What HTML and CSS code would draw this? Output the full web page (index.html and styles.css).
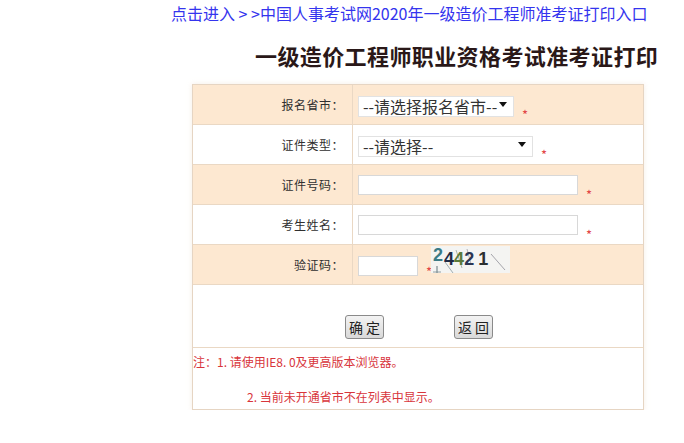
FILE: index.html
```html
<!DOCTYPE html>
<html lang="zh-CN">
<head>
<meta charset="utf-8">
<title>一级造价工程师职业资格考试准考证打印</title>
<link rel="stylesheet" href="styles.css">
</head>
<body>
<div class="page">
  <div class="topline"><a class="toplink" href="#">点击进入 &gt; &gt;中国人事考试网2020年一级造价工程师准考证打印入口</a></div>
  <h1 class="title">一级造价工程师职业资格考试准考证打印</h1>
  <div class="form">
    <div class="row peach">
      <div class="label">报名省市：</div>
      <div class="field">
        <span class="sel sel-wide"><select><option>--请选择报名省市--</option></select></span>
        <span class="req">*</span>
      </div>
    </div>
    <div class="row">
      <div class="label">证件类型：</div>
      <div class="field">
        <span class="sel sel-long"><select><option>--请选择--</option></select></span>
        <span class="req">*</span>
      </div>
    </div>
    <div class="row peach">
      <div class="label">证件号码：</div>
      <div class="field">
        <input class="txt" type="text">
        <span class="req">*</span>
      </div>
    </div>
    <div class="row">
      <div class="label">考生姓名：</div>
      <div class="field">
        <input class="txt" type="text">
        <span class="req">*</span>
      </div>
    </div>
    <div class="row peach">
      <div class="label">验证码：</div>
      <div class="field field-code">
        <input class="txt txt-code" type="text">
        <span class="req req-low">*</span>
        <span class="captcha">
          <svg class="captcha-lines" width="79" height="27" viewBox="0 0 79 27">
            <path d="M4 4 L7 3" stroke="#3b7b86" stroke-width="1" fill="none"/>
            <path d="M6 20 L6 27" stroke="#7a8a90" stroke-width="1.2" fill="none"/>
            <path d="M2 26 L10 26" stroke="#7a8a90" stroke-width="0.8" fill="none"/>
            <path d="M14 16 L22 27" stroke="#8a9aa0" stroke-width="0.8" fill="none"/>
            <path d="M25 4 L31 22" stroke="#9aa8a0" stroke-width="0.8" fill="none"/>
            <path d="M36 3 L40 18" stroke="#a0a0a8" stroke-width="0.8" fill="none"/>
            <path d="M60 8 L74 24" stroke="#8f8f98" stroke-width="0.8" fill="none"/>
          </svg>
          <span class="d d1">2</span><span class="d d2">4</span><span class="d d3">4</span><span class="d d4">2</span><span class="d d5">1</span>
        </span>
      </div>
    </div>
    <div class="buttons">
      <button class="btn" type="button">确 定</button>
      <button class="btn" type="button">返 回</button>
    </div>
    <div class="notes">
      <div class="note1">注：1. 请使用IE8. 0及更高版本浏览器。</div>
      <div class="note2">2. 当前未开通省市不在列表中显示。</div>
    </div>
  </div>
</div>
</body>
</html>
```
FILE: styles.css
```css
* { box-sizing: border-box; }
html, body { margin: 0; padding: 0; background: #ffffff; }
body { font-family: "Noto Sans CJK SC", "Noto Sans", sans-serif; color: #333; }

.page { width: 684px; }

.topline {
  height: 26px;
  line-height: 26px;
  padding-left: 171px;
  white-space: nowrap;
}
.toplink {
  font-size: 16px;
  color: #3434ee;
  text-decoration: none;
}

.title {
  margin: 0;
  padding: 14px 0 14px 255px;
  line-height: 30px;
  font-size: 22px;
  font-weight: bold;
  color: #2a1818;
  white-space: nowrap;
  letter-spacing: 0.4px;
}

.form {
  margin-left: 192px;
  width: 452px;
  border: 1px solid #e6d5c3;
  box-shadow: 0 0 5px rgba(240, 225, 210, 0.6);
}

.row {
  display: grid;
  grid-template-columns: 160px 1fr;
  height: 40px;
  border-bottom: 1px solid #ead8c4;
  background: #ffffff;
}
.row.peach { background: #fde8d1; }

.label {
  border-right: 1px solid #ead8c4;
  text-align: right;
  padding-right: 8px;
  font-size: 12px;
  letter-spacing: 0.5px;
  line-height: 39px;
  color: #2f2f2f;
}

.field {
  display: flex;
  align-items: center;
  padding-left: 5px;
}

.sel {
  position: relative;
  display: inline-block;
  height: 21px;
}
.sel select {
  appearance: none;
  -webkit-appearance: none;
  height: 21px;
  border: 1px solid #e2e2e2;
  background: #ffffff;
  font-family: "Noto Sans CJK SC", sans-serif;
  font-size: 16px;
  line-height: 19px;
  color: #333;
  padding: 0 0 0 4px;
  margin: 0;
  border-radius: 0;
}
.sel-wide select { width: 156px; }
.sel-long select { width: 175px; }
.sel::after {
  content: "";
  position: absolute;
  right: 7px;
  top: 8px;
  border-left: 4px solid transparent;
  border-right: 4px solid transparent;
  border-top: 5px solid #111;
  pointer-events: none;
}

.txt {
  width: 220px;
  height: 20px;
  border: 1px solid #d8d8d8;
  background: #fff;
  margin: 0;
  padding: 0;
}
.txt-code { width: 60px; height: 20px; margin-top: 10px; }

.req {
  color: #e24545;
  font-size: 13px;
  margin-left: 8px;
  line-height: 1;
  padding-top: 20px;
}
.field-code { align-items: flex-start; padding-top: 1px; }
.req-low { margin-left: 8px; padding-top: 19px; margin-right: -1px; }

.captcha {
  position: relative;
  display: inline-block;
  width: 79px;
  height: 27px;
  background: #f4f4f2;
  font-family: "Liberation Sans", sans-serif;
  font-weight: bold;
  font-size: 18px;
  line-height: 27px;
  padding-left: 2px;
  white-space: nowrap;
}
.captcha-lines { position: absolute; left: 0; top: 0; }
.d { position: relative; display: inline-block; }
.d1 { color: #3b7b86; top: -4px; }
.d2 { color: #1f2a44; margin-left: 1px; }
.d3 { color: #5b7a3b; margin-left: 0; }
.d4 { color: #2a3552; margin-left: 0; }
.d5 { color: #2b2f2f; margin-left: 4px; }

.buttons {
  height: 63px;
  border-bottom: 1px solid #ead8c4;
  display: flex;
  justify-content: center;
  align-items: flex-start;
  gap: 70px;
  padding-top: 30px;
  padding-left: 2px;
}
.btn {
  width: 39px;
  height: 24px;
  padding: 0;
  font-family: "Noto Sans CJK SC", sans-serif;
  font-size: 14px;
  line-height: 20px;
  color: #222;
  background: linear-gradient(#f3f3f3, #d9d9d9);
  border: 1px solid #8a8a8a;
  border-radius: 3px;
  white-space: nowrap;
}

.notes {
  height: 61px;
  color: #d8353b;
  font-size: 12px;
  font-family: "Noto Sans CJK SC", sans-serif;
}
.note1 { line-height: 28px; }
.note2 { line-height: 26px; margin-top: 8px; padding-left: 54px; }
```
